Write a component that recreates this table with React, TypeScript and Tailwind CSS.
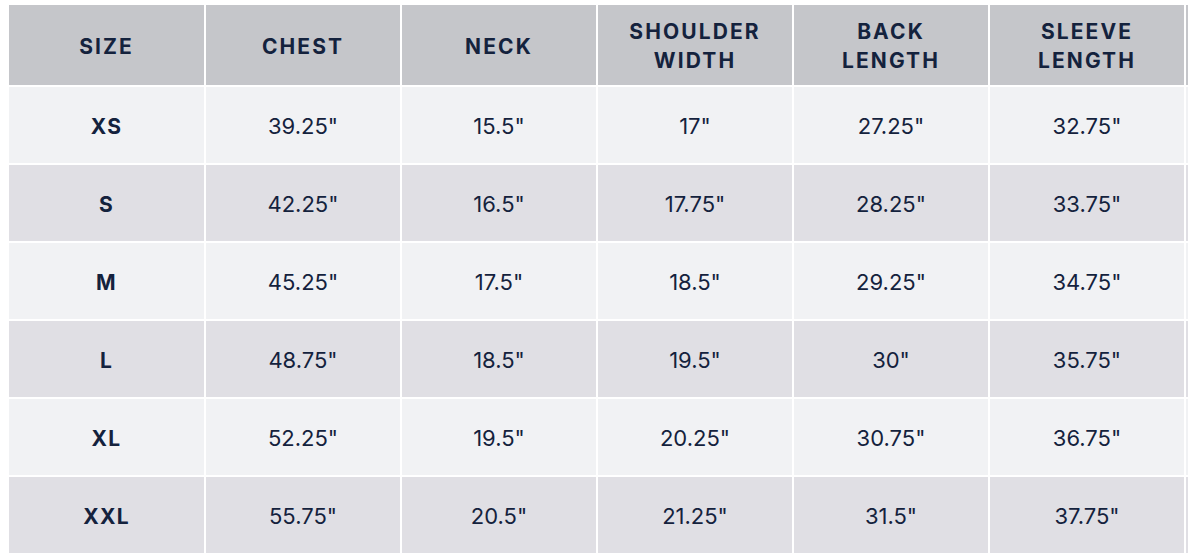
import React from 'react'

type Row = {
  size:     string
  chest:    string
  neck:     string
  shoulder: string
  back:     string
  sleeve:   string
}

const headers = ['Size', 'Chest', 'Neck', 'Shoulder Width', 'Back Length', 'Sleeve Length']

const rows: Row[] = [
  { size: 'XS',  chest: '39.25"', neck: '15.5"', shoulder: '17"',    back: '27.25"', sleeve: '32.75"' },
  { size: 'S',   chest: '42.25"', neck: '16.5"', shoulder: '17.75"', back: '28.25"', sleeve: '33.75"' },
  { size: 'M',   chest: '45.25"', neck: '17.5"', shoulder: '18.5"',  back: '29.25"', sleeve: '34.75"' },
  { size: 'L',   chest: '48.75"', neck: '18.5"', shoulder: '19.5"',  back: '30"',    sleeve: '35.75"' },
  { size: 'XL',  chest: '52.25"', neck: '19.5"', shoulder: '20.25"', back: '30.75"', sleeve: '36.75"' },
  { size: 'XXL', chest: '55.75"', neck: '20.5"', shoulder: '21.25"', back: '31.5"',  sleeve: '37.75"' },
]

export default function App() {
  return (
    <div className="w-full h-[560px] overflow-hidden bg-white pl-[9px] pt-[5px] font-['Inter','Liberation_Sans',sans-serif] text-[#14223d]">
      <div className="grid grid-cols-[195px_repeat(6,194px)] grid-rows-[80px] auto-rows-[76px] gap-[2px] w-max">
        {/* cabecera */}
        {headers.map(h => (
          <div
            key={h}
            className="bg-[#c5c6ca] flex items-center justify-center text-center uppercase font-bold text-[21px] leading-[29px] tracking-[0.1em] px-6 pt-[2px]"
          >
            {h}
          </div>
        ))}
        <div className="bg-[#c5c6ca]" />

        {/* filas */}
        {rows.map((r, i) => {
          const bg = i % 2 === 0 ? 'bg-[#f1f2f4]' : 'bg-[#e0dfe4]'
          const cells = [r.chest, r.neck, r.shoulder, r.back, r.sleeve]
          return (
            <React.Fragment key={r.size}>
              <div className={`${bg} flex items-center justify-center pt-[3px] font-bold text-[21px] tracking-[0.06em]`}>
                {r.size}
              </div>
              {cells.map((c, j) => (
                <div key={j} className={`${bg} flex items-center justify-center pt-[3px] text-[22px]`}>
                  {c}
                </div>
              ))}
              <div className={bg} />
            </React.Fragment>
          )
        })}
      </div>
    </div>
  )
}
